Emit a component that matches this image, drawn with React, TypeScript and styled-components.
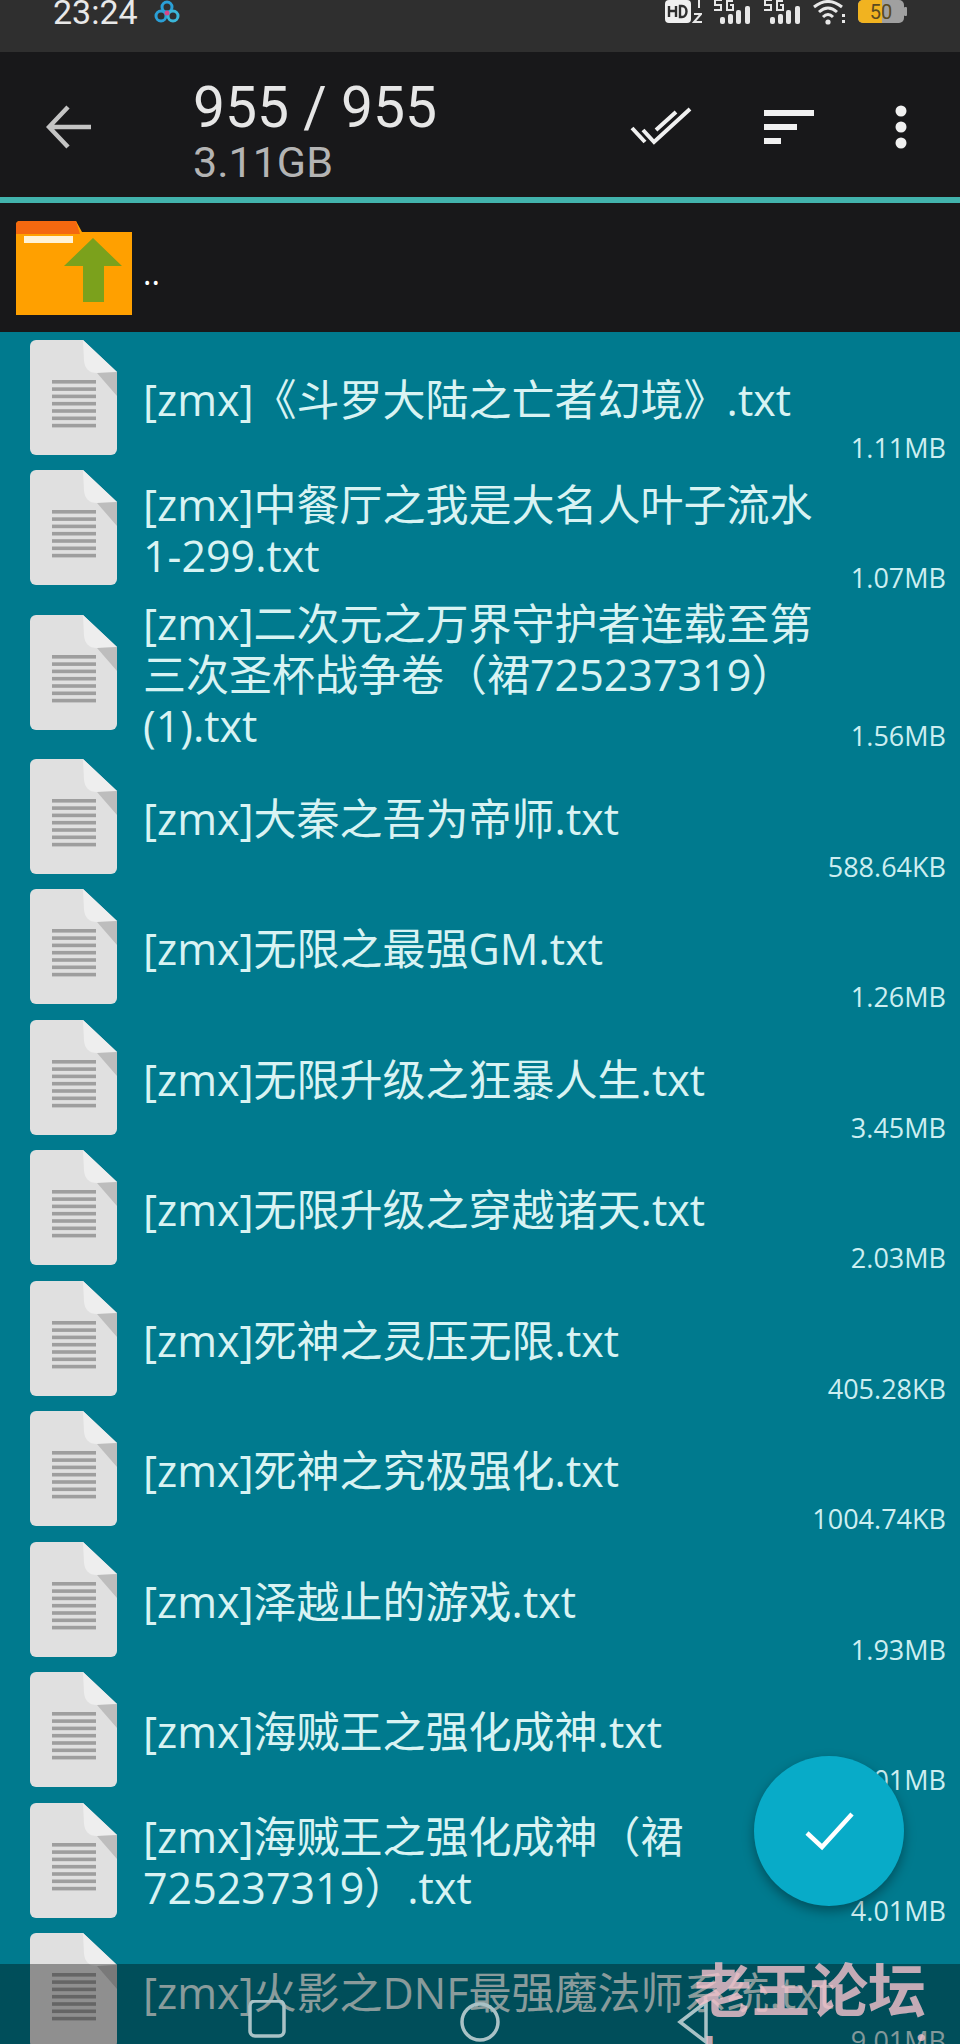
import React from 'react'
import styled, { createGlobalStyle } from 'styled-components'

const GlobalStyle = createGlobalStyle`
  html, body {
    margin: 0;
    padding: 0;
    background: #007a8e;
  }
  * {
    box-sizing: border-box;
  }
`

const Screen = styled.div`
  position: relative;
  width: 960px;
  height: 2044px;
  overflow: hidden;
  background: #007a8e;
  font-family: 'Open Sans', 'Noto Sans CJK SC', sans-serif;
`

const StatusBar = styled.div`
  height: 52px;
  padding: 0 53px 28px 53px;
  background: #2f2f2f;
  display: flex;
  align-items: center;
  color: #e8e8e8;
  font-family: Roboto, sans-serif;
`

const Clock = styled.span`
  font-size: 34px;
  line-height: 24px;
`

const StatusLogo = styled.svg`
  width: 30px;
  height: 26px;
  margin-left: 14px;
`

const StatusIcons = styled.div`
  margin-left: auto;
  display: flex;
  align-items: center;
  gap: 11px;
`

const Toolbar = styled.div`
  height: 145px;
  background: #18181a;
  display: flex;
  align-items: center;
  padding: 4px 53px 0 46px;
  font-family: Roboto, sans-serif;
`

const TitleBlock = styled.div`
  margin-left: 101px;
  margin-top: 8px;
  display: flex;
  flex-direction: column;
`

const Title = styled.div`
  font-size: 57px;
  line-height: 62px;
  color: #e6e6e6;
`

const Subtitle = styled.div`
  font-size: 43px;
  line-height: 46px;
  color: #b4b4b4;
`

const Actions = styled.div`
  margin-left: auto;
  display: flex;
  align-items: center;
  gap: 72px;
`

const MenuDots = styled.svg`
  margin-left: 9px;
`

const AccentLine = styled.div`
  height: 6px;
  background: #42b3ad;
`

const ParentRow = styled.div`
  height: 129px;
  background: #18181a;
  display: flex;
  align-items: center;
  padding-left: 16px;
  color: #ffffff;
  font-size: 32px;
`

const ParentLabel = styled.span`
  margin-left: 11px;
  margin-top: 10px;
`

const FileList = styled.div`
  display: flex;
  flex-direction: column;
`

const Row = styled.div<{ $tall?: boolean }>`
  height: ${p => (p.$tall ? 158 : 130.5)}px;
  display: flex;
  align-items: center;
  padding: 0 14px 0 30px;
`

const FileGlyph = styled.svg`
  width: 87px;
  height: 115px;
  flex: none;
`

const FileName = styled.div`
  margin-left: 26px;
  margin-top: 4px;
  max-width: 700px;
  font-size: 43px;
  line-height: 51px;
  color: #d8f3f3;
`

const FileSize = styled.div`
  margin-left: auto;
  flex: none;
  align-self: flex-end;
  font-size: 27px;
  line-height: 30px;
  color: #cdeef1;
`

const NavBar = styled.div`
  position: absolute;
  left: 0;
  right: 0;
  bottom: 0;
  height: 80px;
  background: rgba(0, 0, 0, 0.36);
`

const NavIcon = styled.svg<{ $x: number }>`
  position: absolute;
  left: ${p => p.$x}px;
  top: 36px;
  width: 44px;
  height: 44px;
`

const Fab = styled.div`
  position: absolute;
  left: 754px;
  top: 1756px;
  width: 150px;
  height: 150px;
  border-radius: 50%;
  background: #08abc8;
  box-shadow: 0 5px 12px rgba(0, 0, 0, 0.35);
  display: flex;
  align-items: center;
  justify-content: center;
`

const Watermark = styled.div`
  position: absolute;
  left: 694px;
  top: 1946px;
  width: 240px;
  color: rgba(245, 195, 205, 0.8);
  font-weight: 700;
  font-family: 'Noto Sans CJK SC', sans-serif;
`

const WatermarkTitle = styled.div`
  font-size: 58px;
  line-height: 82px;
  white-space: nowrap;
`

const WatermarkUrl = styled.div`
  font-size: 42px;
  line-height: 46px;
  margin-left: 9px;
  white-space: nowrap;
`

const files = [
  { name: '[zmx]《斗罗大陆之亡者幻境》.txt', size: '1.11MB' },
  { name: '[zmx]中餐厅之我是大名人叶子流水1-299.txt', size: '1.07MB' },
  { name: '[zmx]二次元之万界守护者连载至第三次圣杯战争卷（裙725237319）(1).txt', size: '1.56MB', tall: true },
  { name: '[zmx]大秦之吾为帝师.txt', size: '588.64KB' },
  { name: '[zmx]无限之最强GM.txt', size: '1.26MB' },
  { name: '[zmx]无限升级之狂暴人生.txt', size: '3.45MB' },
  { name: '[zmx]无限升级之穿越诸天.txt', size: '2.03MB' },
  { name: '[zmx]死神之灵压无限.txt', size: '405.28KB' },
  { name: '[zmx]死神之究极强化.txt', size: '1004.74KB' },
  { name: '[zmx]泽越止的游戏.txt', size: '1.93MB' },
  { name: '[zmx]海贼王之强化成神.txt', size: '4.01MB' },
  { name: '[zmx]海贼王之强化成神（裙725237319）.txt', size: '4.01MB' },
  { name: '[zmx]火影之DNF最强魔法师系统.txt', size: '9.01MB' },
]

const TextFileIcon = () => (
  <FileGlyph viewBox="0 0 87 115">
    <path
      d="M6 0H53L87 32V109a6 6 0 0 1-6 6H6a6 6 0 0 1-6-6V6a6 6 0 0 1 6-6z"
      fill="#e0e0e0"
    />
    <path d="M53 0L87 32L67 33Q55 33 54 20z" fill="#eeeeee" />
    <path d="M67 33L87 32V56z" fill="#bdbdbd" />
    {[40, 47.3, 54.6, 61.9, 69.2, 76.5, 83.8].map(y => (
      <rect key={y} x="22" y={y} width="44" height="3.6" fill="#9e9e9e" />
    ))}
  </FileGlyph>
)

const App: React.FC = () => {
  return (
    <Screen>
      <GlobalStyle />
      <StatusBar>
        <Clock>23:24</Clock>
        <StatusLogo viewBox="0 0 30 26">
          <circle cx="15" cy="8" r="5" fill="none" stroke="#2a9fd6" strokeWidth="3" />
          <circle cx="9" cy="17" r="5" fill="none" stroke="#2a9fd6" strokeWidth="3" />
          <circle cx="21" cy="17" r="5" fill="none" stroke="#3bb6d8" strokeWidth="3" />
          <circle cx="15" cy="14" r="2.5" fill="#d6478a" />
        </StatusLogo>
        <StatusIcons>
          <svg width="37" height="26" viewBox="0 0 37 26">
            <rect x="0" y="1" width="26" height="23" rx="4" fill="#f0f0f0" />
            <path d="M4 7v11M11 7v11M4 12h7" stroke="#2f2f2f" strokeWidth="2.4" fill="none" />
            <path d="M15 7v11h2a4.5 5.5 0 0 0 0-11z" stroke="#2f2f2f" strokeWidth="2.4" fill="none" />
            <path d="M31 0h3v9M29 15h7l-7 8h8" stroke="#e8e8e8" strokeWidth="2" fill="none" />
          </svg>
          {[0, 1].map(i => (
            <svg key={i} width="39" height="26" viewBox="0 0 39 26">
              <path d="M9 1H2v5h6v5H1M20 2h-6v9h6V6h-3" stroke="#e8e8e8" strokeWidth="2" fill="none" />
              <rect x="7" y="18" width="5" height="7" rx="2" fill="#e8e8e8" />
              <rect x="15" y="15" width="5" height="10" rx="2" fill="#e8e8e8" />
              <rect x="23" y="11" width="5" height="14" rx="2" fill="#e8e8e8" />
              <rect x="32" y="7" width="5" height="18" rx="2" fill="#e8e8e8" />
            </svg>
          ))}
          <svg width="34" height="26" viewBox="0 0 34 26">
            <path d="M1 8Q15 -3 29 8M6 13Q15 5 24 13M10 18Q15 13 20 18" stroke="#e8e8e8" strokeWidth="3" fill="none" />
            <circle cx="15" cy="23" r="2.6" fill="#e8e8e8" />
            <rect x="29" y="15" width="3" height="3" fill="#e8e8e8" />
            <rect x="29" y="21" width="3" height="3" fill="#e8e8e8" />
          </svg>
          <svg width="49" height="26" viewBox="0 0 49 26">
            <rect x="0" y="1" width="46" height="23" rx="5" fill="#a0a0a0" />
            <path d="M5 1H24V24H5a5 5 0 0 1-5-5V6a5 5 0 0 1 5-5z" fill="#f1b320" />
            <rect x="46" y="8" width="3" height="9" rx="1" fill="#a0a0a0" />
            <text x="23" y="20" textAnchor="middle" fontSize="20" fontFamily="Roboto, sans-serif" fill="#5a4a20">50</text>
          </svg>
        </StatusIcons>
      </StatusBar>

      <Toolbar>
        <svg width="46" height="44" viewBox="0 0 46 44">
          <path d="M22 2L3 22L22 42M3 22H45" stroke="#c4c4c4" strokeWidth="4.5" fill="none" />
        </svg>
        <TitleBlock>
          <Title>955 / 955</Title>
          <Subtitle>3.11GB</Subtitle>
        </TitleBlock>
        <Actions>
          <svg width="62" height="42" viewBox="0 0 62 42">
            <path d="M2 22L15 36M13 24L24 36L60 3M26 24L46 6" stroke="#f0f0f0" strokeWidth="4" fill="none" />
          </svg>
          <svg width="50" height="34" viewBox="0 0 50 34">
            <rect x="0" y="0" width="50" height="6" fill="#f0f0f0" />
            <rect x="0" y="14" width="33" height="6" fill="#f0f0f0" />
            <rect x="0" y="28" width="17" height="6" fill="#f0f0f0" />
          </svg>
          <MenuDots width="12" height="44" viewBox="0 0 12 44">
            <circle cx="6" cy="6" r="5.5" fill="#f0f0f0" />
            <circle cx="6" cy="22" r="5.5" fill="#f0f0f0" />
            <circle cx="6" cy="38" r="5.5" fill="#f0f0f0" />
          </MenuDots>
        </Actions>
      </Toolbar>
      <AccentLine />

      <ParentRow>
        <svg width="116" height="94" viewBox="0 0 116 94">
          <path d="M4 0H60L66 11H116V94H0V4a4 4 0 0 1 4-4z" fill="#ffa000" />
          <path d="M4 0H60L64 13H0V4a4 4 0 0 1 4-4z" fill="#f4680f" />
          <rect x="8" y="15" width="49" height="7" fill="#fff3d6" />
          <path d="M77 17L106 45H88V81H67V45H48z" fill="#7ba11c" />
        </svg>
        <ParentLabel>..</ParentLabel>
      </ParentRow>

      <FileList>
        {files.map(file => (
          <Row key={file.name} $tall={file.tall}>
            <TextFileIcon />
            <FileName>{file.name}</FileName>
            <FileSize>{file.size}</FileSize>
          </Row>
        ))}
      </FileList>

      <Fab>
        <svg width="50" height="40" viewBox="0 0 50 40">
          <path d="M3 22L18 36L48 3" stroke="#ffffff" strokeWidth="4.5" fill="none" />
        </svg>
      </Fab>

      <NavBar>
        <NavIcon $x={245} viewBox="0 0 44 44">
          <rect x="5" y="1" width="34" height="35" rx="5" fill="none" stroke="#a9c2c6" strokeWidth="3.5" />
        </NavIcon>
        <NavIcon $x={458} viewBox="0 0 44 44">
          <circle cx="22" cy="22" r="18" fill="none" stroke="#a9c2c6" strokeWidth="3.5" />
        </NavIcon>
        <NavIcon $x={672} viewBox="0 0 44 44">
          <path d="M34 2L8 22L34 42z" fill="none" stroke="#a9c2c6" strokeWidth="3.5" />
        </NavIcon>
      </NavBar>

      <Watermark>
        <WatermarkTitle>老王论坛</WatermarkTitle>
        <WatermarkUrl>laowang.vip</WatermarkUrl>
      </Watermark>
    </Screen>
  )
}

export default App
